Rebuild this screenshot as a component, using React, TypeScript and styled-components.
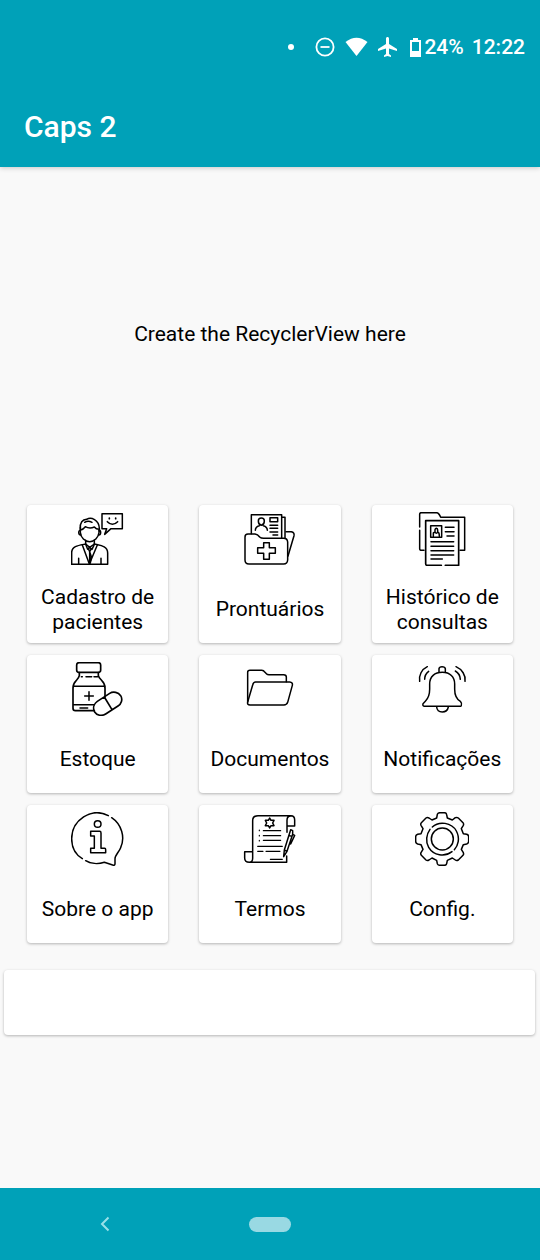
import React from "react";
import styled, { createGlobalStyle } from "styled-components";

const TEAL = "#00a1b8";

const GlobalStyle = createGlobalStyle`
  *, *::before, *::after { box-sizing: border-box; }
  body { margin: 0; font-family: Roboto, "Liberation Sans", sans-serif; color: #000; background: #f9f9f9; }
  button { font: inherit; color: inherit; border: 0; padding: 0; cursor: pointer; }
`;

const Screen = styled.div`
  min-height: 100vh;
  display: flex;
  flex-direction: column;
`;

const Header = styled.header`
  background: ${TEAL};
  color: #fff;
  box-shadow: 0 1px 5px rgba(0, 0, 0, 0.2);
`;

const StatusBar = styled.div`
  display: flex;
  align-items: center;
  justify-content: flex-end;
  height: 83px;
  padding: 11px 15px 0 0;
  font-size: 21px;
  font-weight: 500;
  line-height: 24px;
`;

const StatusIcon = styled.svg<{ $gap: number }>`
  display: block;
  flex: none;
  margin-right: ${(p) => p.$gap}px;
`;

const Battery = styled.span`
  margin-right: 8px;
`;

const AppTitle = styled.h1`
  margin: 0;
  padding: 2px 24px 0;
  font-size: 30px;
  font-weight: 500;
  line-height: 84px;
  height: 84px;
`;

const Main = styled.main`
  flex: 1;
  display: flex;
  flex-direction: column;
`;

const ListPlaceholder = styled.section`
  display: flex;
  align-items: center;
  justify-content: center;
  height: 338px;
  padding-bottom: 4px;
  font-size: 21px;
  line-height: 25px;
`;

const MenuGrid = styled.nav`
  display: grid;
  grid-template-columns: repeat(3, 1fr);
  gap: 12px 31px;
  padding: 0 27px;
`;

const raised = `
  background: #fff;
  border-radius: 4px;
  box-shadow: 0 1px 3px rgba(0, 0, 0, 0.28);
`;

const MenuCard = styled.button`
  ${raised}
  display: flex;
  flex-direction: column;
  align-items: center;
  height: 138px;
  padding-top: 7px;
`;

const MenuIcon = styled.svg`
  width: 54px;
  height: 54px;
  flex: none;
  fill: none;
  stroke: #000;
  stroke-width: 4.5;
  stroke-linejoin: round;
  stroke-linecap: round;
`;

const MenuLabel = styled.span`
  flex: 1;
  display: flex;
  align-items: center;
  margin-top: 10px;
  padding: 0 8px;
  font-size: 21px;
  line-height: 25px;
  text-align: center;
`;

const EmptyCard = styled.section`
  ${raised}
  height: 65px;
  margin: 27px 5px 27px 4px;
`;

const SystemNav = styled.footer`
  display: grid;
  grid-template-columns: repeat(3, 1fr);
  align-items: center;
  justify-items: center;
  height: 72px;
  padding: 0 22px;
  background: ${TEAL};
`;

const BackButton = styled.button`
  display: flex;
  align-items: center;
  justify-content: center;
  width: 48px;
  height: 48px;
  background: transparent;
`;

const HomeButton = styled.button`
  width: 42px;
  height: 15px;
  border-radius: 8px;
  background: #99d9e3;
`;

const RegisterIcon = () => (
  <MenuIcon viewBox="153 42 162 162" aria-hidden="true">
    <path d="M246 47H307V92H273L254 109L260 92H246Z" />
    <path d="M262 71Q277 87 293 71" />
    <path d="M268 60v2M287 60v2" strokeWidth="5" />
    <path d="M181 93C179 73 188 65 200 64C213 56 237 65 238 91V100" />
    <path d="M181 88V103C182 119 195 131 209 131C223 131 235 119 237 104V94C230 94 226 91 223 87C214 91 203 90 196 86C192 91 187 95 182 96" />
    <path d="M194 73Q204 66 216 73" />
    <path d="M181 97C174 97 175 111 182 111M238 97C244 97 243 111 237 111" />
    <path d="M197 127V138L209 148L223 138V127" />
    <path d="M197 138C177 142 155 144 155 164V199H263V165C263 143 240 142 223 138" />
    <path d="M187 141L208 198L232 141M197 139L203 154L209 148L216 154L223 139" />
    <path d="M205 152L209 161L214 152M209 161V198M209 161L214 176L211 195" />
    <path d="M176 181V198M243 181V198" />
  </MenuIcon>
);

const RecordsIcon = () => (
  <MenuIcon viewBox="159 42 162 162" aria-hidden="true">
    <path d="M184 107V50H275V120M277 58H285V120" />
    <path d="M165 117Q165 108 174 108H195Q203 109 209 117Q213 121 221 121H281Q292 121 293 132V186Q292 198 281 198H177Q165 198 165 186Z" />
    <path d="M288 101H304Q314 103 312 113L294 174" />
    <path d="M221 134H238V149H256V166H238V184H221V166H203V149H221Z" />
    <path d="M205 69Q205 60 214 60Q223 60 223 69Q223 80 214 82Q205 80 205 69ZM196 97Q196 86 208 83M220 83Q232 86 232 97" />
    <path d="M240 59H263V71H240ZM240 82H263M240 91H263M240 102H263M249 111H263" />
  </MenuIcon>
);

const HistoryIcon = () => (
  <MenuIcon viewBox="153 42 162 162" aria-hidden="true">
    <path d="M167 87V48Q167 44 172 44H218Q225 45 230 58H302V157H288" />
    <path d="M167 97V152Q167 157 173 157H180" />
    <path d="M232 202H190Q185 202 185 197V68H284V202H244" strokeWidth="5" />
    <path d="M200 83H233V118H200ZM208 114V107Q207 103 213 103V95Q214 91 217 91Q221 92 221 96V103Q226 103 226 114M213 103Q217 108 221 103" />
    <path d="M244 88H270M244 101H270M249 114H270M201 131H269M201 145H269M201 158H269M201 171H269M201 183H235" />
  </MenuIcon>
);

const StockIcon = () => (
  <MenuIcon viewBox="153 42 162 162" aria-hidden="true">
    <path d="M177 44H235Q242 44 242 51V66Q242 73 235 73H177Q170 73 170 66V51Q170 44 177 44Z" strokeWidth="5" />
    <path d="M178 74V83Q177 88 170 96Q159 107 159 120V181Q159 188 166 188H223M235 74V83Q236 88 244 96Q255 107 255 120V148" strokeWidth="5" />
    <path d="M184 86h3M198 86h17M222 86h11M161 115H254M161 170H222M180 180H203M194 144H220M207 131V157" />
    <path d="M232 160L269 136C280 129 295 133 302 143C309 154 304 168 294 174L257 198C246 205 231 203 224 192C218 181 221 168 232 160ZM253 147L276 185" strokeWidth="5" />
  </MenuIcon>
);

const FolderIcon = () => (
  <MenuIcon viewBox="159 42 162 162" aria-hidden="true">
    <path d="M173 162V73Q173 67 180 67H215Q221 67 225 73L230 78Q232 80 237 80H281Q289 80 289 87V101" />
    <path d="M197 102H299Q309 103 307 112L293 163Q290 171 282 171H180Q171 171 173 162L188 111Q190 102 197 102Z" />
  </MenuIcon>
);

const BellIcon = () => (
  <MenuIcon viewBox="153 42 162 162" aria-hidden="true">
    <path d="M225 73V62Q226 56 234 56Q243 56 244 62V73" />
    <path d="M197 108C197 86 212 73 235 73C258 73 272 87 272 108V124C272 144 278 154 289 160Q295 167 292 173Q290 175 286 175H182Q175 175 177 167L184 160C193 151 197 139 197 124Z" />
    <path d="M218 177C220 197 249 197 253 177M167 100C164 82 173 64 190 56M182 94Q182 79 194 70M276 56C294 64 306 82 303 100M274 69Q288 77 289 94" />
  </MenuIcon>
);

const InfoIcon = () => (
  <MenuIcon viewBox="153 42 162 162" aria-hidden="true">
    <path d="M265 53C214 26 155 67 155 122C155 147 167 170 187 182" />
    <path d="M275 59C305 79 316 118 302 149C297 162 285 172 285 182V197Q285 203 278 201L253 193C234 199 211 197 197 188" />
    <circle cx="233" cy="78" r="10" />
    <path d="M212 100H239Q243 100 243 105V151H254Q257 151 257 155V164H212V151H223V114H212Z" />
  </MenuIcon>
);

const TermsIcon = () => (
  <MenuIcon viewBox="159 42 162 162" aria-hidden="true">
    <path d="M188 160V68Q188 53 204 53H303Q314 53 314 66V84H291V67Q291 54 302 54M291 84V103M290 174V193H178Q164 193 164 180V161H188V181Q188 193 178 193" />
    <path d="M239 60L243 67H252L248 75L252 83H243L239 90L235 83H226L230 75L226 67H235Z" />
    <path d="M220 98H272M220 113H272M220 127H272M203 145H277M203 160H219M228 160H270M241 184H277M208 96v2M208 112v2M208 127v2" strokeWidth="3.5" />
    <path d="M281 176L283 156L302 95L308 98V109L314 112L302 138M283 156L291 160L308 109M281 176L291 160M297 112L305 115" />
  </MenuIcon>
);

const GearIcon = () => (
  <MenuIcon viewBox="153 42 162 162" aria-hidden="true">
    <path d="M220 49Q222 44 228 44H241Q247 44 248 50L250 60L265 66L274 59Q279 57 283 60L297 74Q300 78 298 82L292 92L298 107L308 109Q314 111 314 116V130Q314 136 308 138L298 140L292 154L298 164Q300 169 297 172L283 186Q278 189 274 186L265 180L250 187L248 197Q247 202 241 202H228Q222 202 220 197L218 187L204 180L195 186Q190 189 186 186L172 172Q169 168 171 164L177 154L171 140L161 138Q155 136 155 130V116Q155 111 161 109L171 107L177 92L171 82Q169 77 172 74L186 60Q190 57 195 60L204 66L218 60Z" />
    <circle cx="235" cy="123" r="33" />
    <path d="M205 87C225 68 263 73 277 99C289 121 282 144 271 155M264 161C242 178 209 173 194 148C184 131 187 109 198 94" />
  </MenuIcon>
);

const items: { label: string; Icon: React.FC }[] = [
  { label: "Cadastro de pacientes", Icon: RegisterIcon },
  { label: "Prontuários", Icon: RecordsIcon },
  { label: "Histórico de consultas", Icon: HistoryIcon },
  { label: "Estoque", Icon: StockIcon },
  { label: "Documentos", Icon: FolderIcon },
  { label: "Notificações", Icon: BellIcon },
  { label: "Sobre o app", Icon: InfoIcon },
  { label: "Termos", Icon: TermsIcon },
  { label: "Config.", Icon: GearIcon },
];

export default function App() {
  return (
    <Screen>
      <GlobalStyle />
      <Header>
        <StatusBar>
          <StatusIcon $gap={21} width="6" height="6" viewBox="0 0 6 6" aria-hidden="true">
            <circle cx="3" cy="3" r="3" fill="#fff" />
          </StatusIcon>
          <StatusIcon $gap={10} width="20" height="20" viewBox="0 0 20 20" aria-hidden="true">
            <circle cx="10" cy="10" r="8.6" fill="none" stroke="#fff" strokeWidth="1.8" />
            <path d="M5.5 10h9" stroke="#fff" strokeWidth="1.8" />
          </StatusIcon>
          <StatusIcon $gap={10} width="23" height="20" viewBox="0 0 23 20" aria-hidden="true">
            <path d="M0.5 5Q11.5 -3.5 22.5 5L11.5 19Z" fill="#fff" />
          </StatusIcon>
          <StatusIcon $gap={13} width="19" height="20" viewBox="2 2 19 20" aria-hidden="true">
            <path
              d="M21 16v-2l-8-5V3.5c0-.83-.67-1.5-1.5-1.5S10 2.67 10 3.5V9l-8 5v2l8-2.500V19l-2 1.500V22l3.500-1 3.500 1v-1.500L13 19v-5.500l8 2.500z"
              fill="#fff"
            />
          </StatusIcon>
          <StatusIcon $gap={3} width="11" height="19" viewBox="0 0 11 19" aria-hidden="true">
            <path d="M3 0H8V2H11V19H0V2H3ZM2 4V13H9V4Z" fill="#fff" fillRule="evenodd" />
          </StatusIcon>
          <Battery>24%</Battery>
          <time>12:22</time>
        </StatusBar>
        <AppTitle>Caps 2</AppTitle>
      </Header>
      <Main>
        <ListPlaceholder>Create the RecyclerView here</ListPlaceholder>
        <MenuGrid>
          {items.map(({ label, Icon }) => (
            <MenuCard key={label} type="button">
              <Icon />
              <MenuLabel>{label}</MenuLabel>
            </MenuCard>
          ))}
        </MenuGrid>
        <EmptyCard />
      </Main>
      <SystemNav>
        <BackButton type="button" aria-label="Voltar">
          <svg width="10" height="16" viewBox="0 0 10 16" fill="none" stroke="#99e0e8" strokeWidth="2" aria-hidden="true">
            <path d="M8.500 1.500L2 8L8.500 14.500" />
          </svg>
        </BackButton>
        <HomeButton type="button" aria-label="Início" />
      </SystemNav>
    </Screen>
  );
}
